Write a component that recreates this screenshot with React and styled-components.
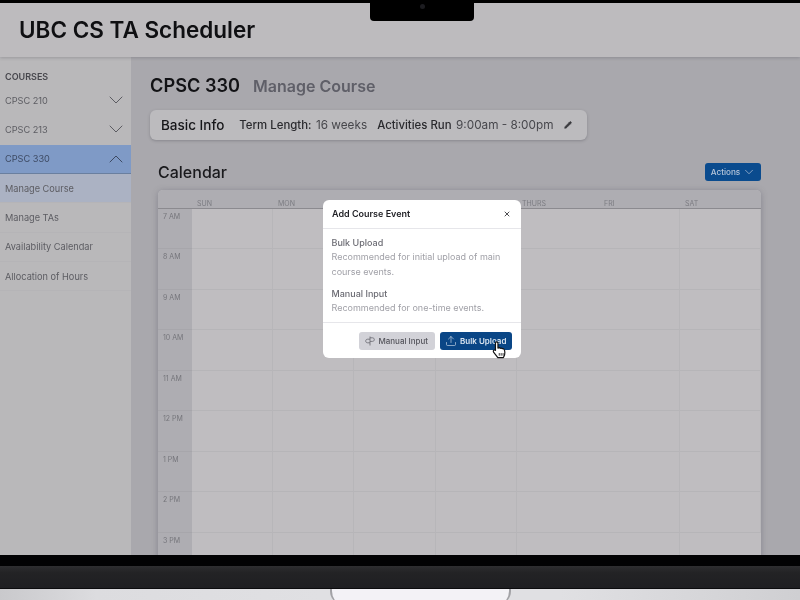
import React from 'react'
import styled, { createGlobalStyle } from 'styled-components'
import { ChevronDown, ChevronUp, Pencil, X, Upload } from 'lucide-react'

const GlobalStyle = createGlobalStyle`
    html, body {
        margin: 0;
        padding: 0;
        background: #000;
        overflow: hidden;
    }
    * {
        box-sizing: border-box;
    }
    body {
        font-family: Inter, "Liberation Sans", sans-serif;
    }
`

const Page = styled.div`
    position: relative;
    width: 800px;
    height: 600px;
    display: flex;
    flex-direction: column;
    background: #000;
    padding-top: 3px;
    overflow: hidden;
    filter: blur(0.3px);
`

const Screen = styled.div`
    height: 552px;
    flex: none;
    display: flex;
    flex-direction: column;
    overflow: hidden;
    background: #bcbabd;
`

const Header = styled.header`
    position: relative;
    height: 54px;
    flex: none;
    display: flex;
    align-items: center;
    padding: 0 0 0 19px;
    background: #bdbbbe;
    box-shadow: 0 1px 3px rgba(60, 60, 70, 0.25);
`

const AppTitle = styled.h1`
    margin: 0 0 1px;
    font-size: 22.5px;
    font-weight: 600;
    white-space: nowrap;
    color: #0f0f12;
`

const Body = styled.div`
    flex: 1;
    display: flex;
    min-height: 0;
`

const Sidebar = styled.nav`
    width: 131px;
    flex: none;
    background: #b9b8ba;
    padding-top: 13px;
    color: #5c5c62;
`

const SideHeading = styled.div`
    height: 13px;
    margin-bottom: 3px;
    padding-left: 5px;
    font-size: 9px;
    line-height: 13px;
    font-weight: 600;
    color: #47474d;
`

const CourseRow = styled.div`
    height: 29.3px;
    display: flex;
    align-items: center;
    justify-content: space-between;
    padding: 0 3px 0 5px;
    font-size: 9.2px;
    background: ${p => (p.$open ? '#7f9ac6' : 'transparent')};
    border-bottom: 1px solid ${p => (p.$open ? '#6a7f9f' : 'transparent')};
    color: ${p => (p.$open ? '#3d4a63' : '#5c5c62')};
`

const SubRow = styled.div`
    height: 29.4px;
    display: flex;
    align-items: center;
    padding-left: 5px;
    font-size: 9.2px;
    background: ${p => (p.$active ? '#abb2c3' : 'transparent')};
    border-bottom: 1px solid #b5b4b7;
`

const Main = styled.main`
    flex: 1;
    min-width: 0;
    background: #a9a8ad;
    padding: 17px 39px 0 19px;
`

const TitleRow = styled.div`
    display: flex;
    align-items: baseline;
    gap: 13px;
    height: 30px;
`

const CourseCode = styled.h2`
    margin: 0;
    font-size: 18.2px;
    font-weight: 600;
    color: #121215;
`

const CoursePage = styled.span`
    font-size: 16px;
    font-weight: 600;
    color: #5f5f68;
`

const InfoCard = styled.div`
    width: 437px;
    height: 30px;
    margin-top: 6px;
    display: flex;
    align-items: center;
    padding: 0 15px 0 11px;
    border-radius: 6px;
    background: #bcbbbe;
    box-shadow: 0 1px 3px rgba(60, 60, 70, 0.3);
    color: #2a2a2e;
    white-space: nowrap;
`

const InfoTitle = styled.span`
    font-size: 13.5px;
    font-weight: 500;
    color: #161619;
    margin-right: 15px;
`

const InfoLabel = styled.span`
    font-size: 11.4px;
    font-weight: 500;
    margin-right: 4.5px;
`

const InfoValue = styled.span`
    font-size: 11.75px;
    color: #47474c;
    margin-right: 10px;
`

const EditIcon = styled(Pencil)`
    margin-left: auto;
    width: 8px;
    height: 8px;
    color: #3a3a3e;
    fill: #3a3a3e;
`

const CalendarHead = styled.div`
    height: 30px;
    margin: 17px 0 0 8px;
    display: flex;
    align-items: center;
    justify-content: space-between;
`

const CalendarTitle = styled.h3`
    margin: 0;
    font-size: 16px;
    font-weight: 500;
    color: #1a1a1d;
`

const ActionsButton = styled.button`
    width: 56px;
    height: 18px;
    display: flex;
    align-items: center;
    justify-content: center;
    gap: 2px;
    padding: 0 0 0 1px;
    border: none;
    border-radius: 3px;
    background: #0a4b8e;
    color: #b7c6da;
    font-family: inherit;
    font-size: 8.2px;
    font-weight: 500;
`

const CalendarCard = styled.section`
    margin: 3px 0 0 8px;
    height: 400px;
    border-radius: 5px 5px 0 0;
    background: #bfbdc0;
    box-shadow: 0 1px 6px rgba(70, 70, 85, 0.35);
    overflow: hidden;
`

const DayRow = styled.div`
    height: 19px;
    display: grid;
    grid-template-columns: 34px 81px 81px 82px 81px 82px 81px 81px;
    align-items: center;
    background: #aeadb2;
    border-bottom: 1px solid #8b8a8f;
`

const DayName = styled.span`
    padding: 8px 0 0 5px;
    font-size: 7px;
    color: #7c7c82;
`

const HourGrid = styled.div`
    display: grid;
    grid-template-columns: 34px 81px 81px 82px 81px 163px 81px;
    grid-auto-rows: 40.45px;
`

const TimeCell = styled.div`
    padding: 3px 0 0 5px;
    font-size: 7px;
    color: #75757b;
    background: #aeadb2;
    border-bottom: 1px solid #a7a6ab;
`

const HourCell = styled.div`
    background: #bfbdc0;
    border-bottom: 1px solid #b6b5b8;
    border-right: 1px solid #b7b6b9;
    &:last-child {
        border-right: none;
    }
`

const Laptop = styled.div`
    flex: 1;
    display: flex;
    flex-direction: column;
    min-height: 0;
`

const Bezel = styled.div`
    height: 11px;
    flex: none;
    background: #020203;
`

const Deck = styled.div`
    height: 22px;
    flex: none;
    background: linear-gradient(#2e2e30 0, #232325 30%, #1f1f22 100%);
`

const Desk = styled.div`
    flex: 1;
    min-height: 0;
    overflow: hidden;
    display: flex;
    padding-left: 330px;
    background: linear-gradient(90deg, #c9c9cc, #dcdcdf 12%, #e0e0e3 40%, #e0e0e3 70%, #cfcfd2);
    border-top: 1px solid #0c0c0e;
`

const HingeCut = styled.div`
    width: 181px;
    height: 16px;
    flex: none;
    background: #f3f2f6;
    border-radius: 0 0 14px 14px;
    border: 2px solid #a2a2a6;
    border-top: none;
    border-bottom: none;
`

const Notch = styled.div`
    position: absolute;
    top: 0;
    left: 370px;
    width: 104px;
    height: 21px;
    border-radius: 0 0 4px 4px;
    background: #000;
    display: flex;
    justify-content: center;
    padding-top: 4px;
`

const Lens = styled.span`
    width: 5px;
    height: 5px;
    border-radius: 50%;
    background: #1c1c20;
`

const Modal = styled.div`
    position: absolute;
    left: 323px;
    top: 200px;
    width: 198px;
    height: 158px;
    display: flex;
    flex-direction: column;
    border-radius: 6px;
    background: #fff;
    overflow: hidden;
`

const ModalHeader = styled.div`
    height: 29px;
    flex: none;
    display: flex;
    align-items: center;
    justify-content: space-between;
    padding: 0 10px 1px 9px;
    border-bottom: 1px solid #e6e6ea;
    font-size: 9px;
    font-weight: 600;
    color: #1f1f24;
`

const ModalBody = styled.div`
    height: 94px;
    flex: none;
    padding: 6.5px 9px 0 8.5px;
    border-bottom: 1px solid #e6e6ea;
`

const Option = styled.div`
    margin-bottom: 8px;
`

const OptionTitle = styled.div`
    font-size: 9px;
    line-height: 13px;
    font-weight: 500;
    color: #6b6b73;
`

const OptionText = styled.div`
    font-size: 9px;
    line-height: 15px;
    color: #a0a0a7;
`

const ModalFooter = styled.div`
    flex: 1;
    display: flex;
    align-items: flex-start;
    justify-content: flex-end;
    gap: 5px;
    padding: 9px 9px 0 0;
`

const FooterButton = styled.button`
    width: ${p => (p.$primary ? '72px' : '76px')};
    height: 18px;
    display: flex;
    align-items: center;
    justify-content: center;
    gap: 3.5px;
    padding: 0 1px 0 0;
    border: none;
    border-radius: 3px;
    background: ${p => (p.$primary ? '#0a4686' : '#d2d2d8')};
    color: ${p => (p.$primary ? '#dbe5f0' : '#55555c')};
    font-family: inherit;
    font-size: 8px;
    font-weight: ${p => (p.$primary ? 600 : 500)};
`

const HandCursor = styled.svg`
    position: absolute;
    left: 491px;
    top: 340px;
    width: 17px;
    height: 19px;
`

const courses = [
    { code: 'CPSC 210' },
    { code: 'CPSC 213' },
    { code: 'CPSC 330', open: true },
]

const links = ['Manage Course', 'Manage TAs', 'Availability Calendar', 'Allocation of Hours']
const days = ['', 'SUN', 'MON', '', '', 'THURS', 'FRI', 'SAT']
const hours = ['7 AM', '8 AM', '9 AM', '10 AM', '11 AM', '12 PM', '1 PM', '2 PM', '3 PM']

function App() {
    return (
        <Page>
            <GlobalStyle />
            <Screen>
                <Header>
                    <AppTitle>UBC CS TA Scheduler</AppTitle>
                </Header>
                <Body>
                    <Sidebar>
                        <SideHeading>COURSES</SideHeading>
                        {courses.map(course => (
                            <CourseRow key={course.code} $open={course.open}>
                                {course.code}
                                {course.open
                                    ? <ChevronUp size={24} strokeWidth={1} />
                                    : <ChevronDown size={24} strokeWidth={1} />}
                            </CourseRow>
                        ))}
                        {links.map((link, i) => (
                            <SubRow key={link} $active={i === 0}>{link}</SubRow>
                        ))}
                    </Sidebar>
                    <Main>
                        <TitleRow>
                            <CourseCode>CPSC 330</CourseCode>
                            <CoursePage>Manage Course</CoursePage>
                        </TitleRow>
                        <InfoCard>
                            <InfoTitle>Basic Info</InfoTitle>
                            <InfoLabel>Term Length:</InfoLabel>
                            <InfoValue>16 weeks</InfoValue>
                            <InfoLabel>Activities Run</InfoLabel>
                            <InfoValue>9:00am - 8:00pm</InfoValue>
                            <EditIcon />
                        </InfoCard>
                        <CalendarHead>
                            <CalendarTitle>Calendar</CalendarTitle>
                            <ActionsButton>
                                Actions
                                <ChevronDown size={14} strokeWidth={1.2} />
                            </ActionsButton>
                        </CalendarHead>
                        <CalendarCard>
                            <DayRow>
                                {days.map((day, i) => <DayName key={i}>{day}</DayName>)}
                            </DayRow>
                            <HourGrid>
                                {hours.map(hour => (
                                    <React.Fragment key={hour}>
                                        <TimeCell>{hour}</TimeCell>
                                        {[0, 1, 2, 3, 4, 5].map(n => <HourCell key={n} />)}
                                    </React.Fragment>
                                ))}
                            </HourGrid>
                        </CalendarCard>
                    </Main>
                </Body>
            </Screen>
            <Laptop>
                <Bezel />
                <Deck />
                <Desk>
                    <HingeCut />
                </Desk>
            </Laptop>
            <Notch>
                <Lens />
            </Notch>
            <Modal>
                <ModalHeader>
                    Add Course Event
                    <X size={8} strokeWidth={2.4} />
                </ModalHeader>
                <ModalBody>
                    <Option>
                        <OptionTitle>Bulk Upload</OptionTitle>
                        <OptionText>Recommended for initial upload of main course events.</OptionText>
                    </Option>
                    <Option>
                        <OptionTitle>Manual Input</OptionTitle>
                        <OptionText>Recommended for one-time events.</OptionText>
                    </Option>
                </ModalBody>
                <ModalFooter>
                    <FooterButton>
                        <svg width="10" height="10" viewBox="0 0 10 10" fill="none" stroke="#66666d" strokeWidth="0.8">
                            <path d="M5 0.5V9.5M5 3.2H2.6C1.4 3.2 0.7 4 0.7 5S1.4 6.8 2.6 6.8H5M5 1.8H7.4C8.6 1.8 9.3 2.6 9.3 3.6S8.6 5.4 7.4 5.4H5" />
                        </svg>
                        Manual Input
                    </FooterButton>
                    <FooterButton $primary>
                        <Upload size={12} strokeWidth={1.2} />
                        Bulk Upload
                    </FooterButton>
                </ModalFooter>
            </Modal>
            <HandCursor viewBox="0 0 14 16">
                <path
                    d="M4.5 1.6c.7 0 1.2.5 1.2 1.2v4l.5-.2c.6-.2 1.2 0 1.5.4.5-.3 1.2-.2 1.6.3.5-.2 1.2 0 1.5.5.4.6.7 1.5.7 2.7 0 1.3-.2 2.2-.7 3.2l-.5 1.1H5.6L2 10.2c-.4-.6-.3-1.2.2-1.6.5-.3 1-.2 1.4.2V2.8c0-.7.2-1.2.9-1.2z"
                    fill="#fff"
                    stroke="#111"
                    strokeWidth="1"
                    strokeLinejoin="round"
                />
                <path d="M6.8 11v2.2M8.4 11v2.2M10 11v2.2" stroke="#111" strokeWidth="0.7" />
            </HandCursor>
        </Page>
    )
}

export default App
